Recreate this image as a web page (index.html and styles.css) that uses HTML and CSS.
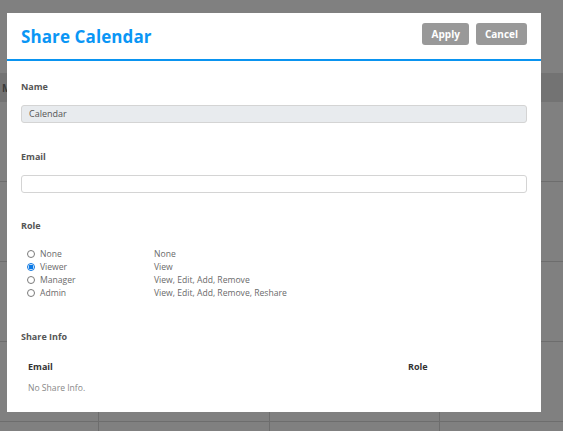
FILE: index.html
```html
<!DOCTYPE html>
<html>
<head>
<meta charset="utf-8">
<link rel="stylesheet" href="styles.css">
</head>
<body>
<div class="calendar">
  <div class="cal-top"></div>
  <div class="cal-head"><span class="cal-head-text">M</span></div>
  <div class="cal-row"><div class="cell c1"></div><div class="cell c2"></div><div class="cell c3"></div><div class="cell c4"></div></div>
  <div class="cal-row"><div class="cell c1"></div><div class="cell c2"></div><div class="cell c3"></div><div class="cell c4"></div></div>
  <div class="cal-row"><div class="cell c1"></div><div class="cell c2"></div><div class="cell c3"></div><div class="cell c4"></div></div>
  <div class="cal-row"><div class="cell c1"></div><div class="cell c2"></div><div class="cell c3"></div><div class="cell c4"></div></div>
  <div class="cal-row last"><div class="cell c1"><span class="day">28</span></div><div class="cell c2"><span class="day">29</span></div><div class="cell c3"><span class="day">30</span></div><div class="cell c4"></div></div>
</div>

<div class="modal">
  <div class="modal-header">
    <h1 class="modal-title">Share Calendar</h1>
    <div class="actions">
      <button class="btn">Apply</button>
      <button class="btn">Cancel</button>
    </div>
  </div>
  <div class="modal-body">
    <div class="field">
      <label class="label">Name</label>
      <div class="input input-disabled">Calendar</div>
    </div>
    <div class="field field-email">
      <label class="label">Email</label>
      <div class="input"></div>
    </div>
    <div class="field">
      <label class="label">Role</label>
      <div class="roles">
        <div class="role"><span class="radio"></span><span class="role-name">None</span><span class="role-desc">None</span></div>
        <div class="role"><span class="radio checked"></span><span class="role-name">Viewer</span><span class="role-desc">View</span></div>
        <div class="role"><span class="radio"></span><span class="role-name">Manager</span><span class="role-desc">View, Edit, Add, Remove</span></div>
        <div class="role"><span class="radio"></span><span class="role-name">Admin</span><span class="role-desc">View, Edit, Add, Remove, Reshare</span></div>
      </div>
    </div>
    <div class="field share">
      <label class="label">Share Info</label>
      <div class="share-table">
        <div class="share-head"><span class="th-email">Email</span><span class="th-role">Role</span></div>
        <div class="share-empty">No Share Info.</div>
      </div>
    </div>
  </div>
</div>
</body>
</html>
```

FILE: styles.css
```css
* { box-sizing: border-box; }
html, body { margin: 0; padding: 0; }
body {
  width: 563px;
  height: 431px;
  overflow: hidden;
  background: #808080;
  font-family: "Open Sans", "Noto Sans", sans-serif;
  position: relative;
}
.calendar { width: 563px; height: 431px; overflow: hidden; }
.cal-top { height: 73px; }
.cal-head {
  height: 29px;
  background: #737373;
  display: flex;
  align-items: center;
  padding-left: 2px;
}
.cal-head-text { font-size: 10px; font-weight: 700; color: #3a3a3a; }
.cal-row {
  display: flex;
  height: 80px;
  border-bottom: 1px solid #6d6d6d;
}
.cal-row.last { height: 9px; border-bottom: none; overflow: hidden; }
.cell { height: 100%; border-right: 1px solid #6d6d6d; text-align: right; padding: 1px 3px 0 0; }
.c1 { width: 99px; }
.c2 { width: 171px; }
.c3 { width: 170px; }
.c4 { flex: 1; border-right: none; }
.day { font-size: 10px; line-height: 12px; color: #444; }

.modal {
  position: absolute;
  left: 7px;
  top: 13px;
  width: 534px;
  height: 399px;
  background: #fff;
}
.modal-header {
  height: 48px;
  border-bottom: 2px solid #0a94f0;
  display: flex;
  align-items: center;
  justify-content: space-between;
  padding: 0 14px 0 14px;
}
.modal-title {
  margin: 0;
  font-size: 17px;
  font-weight: 700;
  color: #0a96f5;
  letter-spacing: 0.1px;
}
.actions { display: flex; gap: 7px; margin-top: -4px; }
.btn {
  font-family: inherit;
  font-size: 10px;
  font-weight: 700;
  color: #fff;
  background: #999;
  border: none;
  border-radius: 3px;
  height: 22px;
  padding: 0 9px;
}
.btn:first-child { padding: 0 9px 0 10px; }
.modal-body { padding: 20px 14px 0 14px; }
.field { display: flex; flex-direction: column; }
.label {
  font-size: 9px;
  font-weight: 700;
  color: #555;
  line-height: 12px;
  margin-bottom: 12px;
}
.input {
  height: 18px;
  border: 1px solid #d4d4d4;
  border-radius: 3px;
  font-size: 9px;
  color: #555;
  padding: 1px 7px;
  line-height: 14px;
  margin-bottom: 28px;
}
.field-email .input { margin-bottom: 27px; }
.input-disabled { background: #e8ebee; }
.roles { padding-left: 6px; margin-top: 3px; margin-bottom: 32px; }
.role { display: flex; align-items: center; height: 13px; font-size: 8.6px; color: #6a6a6a; }
.radio {
  width: 8px; height: 8px;
  border: 1px solid #7a7a7a;
  border-radius: 50%;
  margin-right: 5px;
  flex: none;
}
.radio.checked { border: 1px solid #0a75e0; background: radial-gradient(circle, #0a7ae8 0 2.2px, #fff 2.6px); }
.role-name { width: 114px; }
.share-table { padding: 0 7px; margin-top: 3px; }
.share-head { display: flex; font-size: 9px; font-weight: 700; color: #333; height: 16px; align-items: center; }
.th-email { width: 380px; }
.share-empty { font-size: 8.6px; color: #888; margin-top: 8px; }
```
